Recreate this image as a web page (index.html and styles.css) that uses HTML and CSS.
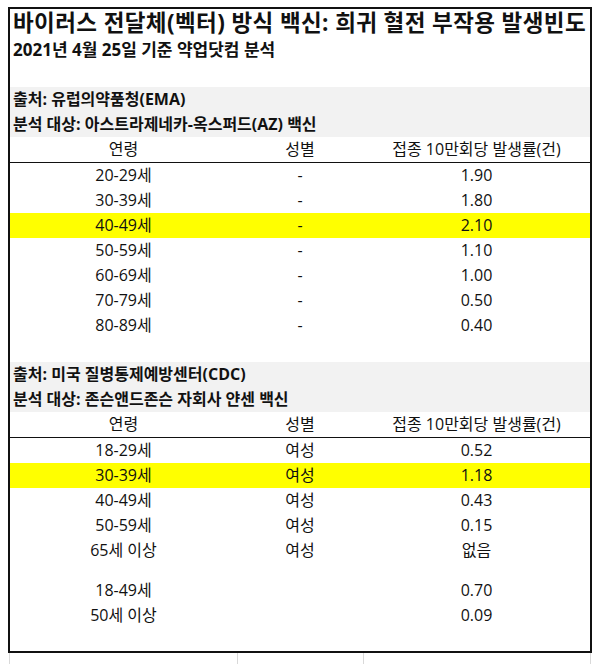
FILE: index.html
```html
<!DOCTYPE html>
<html lang="ko">
<head>
<meta charset="utf-8">
<link rel="stylesheet" href="styles.css">
</head>
<body>
<div class="sheet">
  <div class="box">
    <div class="row title"><span>바이러스 전달체(벡터) 방식 백신: 희귀 혈전 부작용 발생빈도</span></div>
    <div class="row sub"><span>2021년 4월 25일 기준 약업닷컴 분석</span></div>
    <div class="row blank"></div>

    <div class="row src">출처: 유럽의약품청(EMA)</div>
    <div class="row src">분석 대상: 아스트라제네카-옥스퍼드(AZ) 백신</div>
    <div class="row grid head"><span>연령</span><span>성별</span><span>접종 10만회당 발생률(건)</span></div>
    <div class="row grid"><span>20-29세</span><span>-</span><span>1.90</span></div>
    <div class="row grid"><span>30-39세</span><span>-</span><span>1.80</span></div>
    <div class="row grid hl"><span>40-49세</span><span>-</span><span>2.10</span></div>
    <div class="row grid"><span>50-59세</span><span>-</span><span>1.10</span></div>
    <div class="row grid"><span>60-69세</span><span>-</span><span>1.00</span></div>
    <div class="row grid"><span>70-79세</span><span>-</span><span>0.50</span></div>
    <div class="row grid"><span>80-89세</span><span>-</span><span>0.40</span></div>
    <div class="row blank b24"></div>

    <div class="row src">출처: 미국 질병통제예방센터(CDC)</div>
    <div class="row src">분석 대상: 존슨앤드존슨 자회사 얀센 백신</div>
    <div class="row grid head"><span>연령</span><span>성별</span><span>접종 10만회당 발생률(건)</span></div>
    <div class="row grid"><span>18-29세</span><span>여성</span><span>0.52</span></div>
    <div class="row grid hl"><span>30-39세</span><span>여성</span><span>1.18</span></div>
    <div class="row grid"><span>40-49세</span><span>여성</span><span>0.43</span></div>
    <div class="row grid"><span>50-59세</span><span>여성</span><span>0.15</span></div>
    <div class="row grid"><span>65세 이상</span><span>여성</span><span>없음</span></div>
    <div class="row blank b15"></div>
    <div class="row grid"><span>18-49세</span><span></span><span>0.70</span></div>
    <div class="row grid"><span>50세 이상</span><span></span><span>0.09</span></div>
    <div class="row blank b23"></div>
  </div>
  <div class="stub"><span></span><span></span><span></span></div>
</div>
</body>
</html>
```

FILE: styles.css
```css
html, body {
  margin: 0;
  padding: 0;
  background: #fff;
}
body {
  font-family: "Open Sans", "Noto Sans CJK KR", sans-serif;
  color: #111;
}
.sheet {
  padding: 7px 0 0 8px;
  width: 584px;
}
.box {
  border: 2px solid #111;
  width: 580px;
}
.row {
  height: 25px;
  line-height: 25px;
  font-size: 16px;
  white-space: nowrap;
}
.title {
  height: 27px;
  line-height: 28px;
  font-size: 22.5px;
  font-weight: 700;
  padding-left: 3px;
  letter-spacing: 0.4px;
}
.sub {
  height: 26px;
  line-height: 28px;
  font-size: 17px;
  font-weight: 700;
  padding-left: 3px;
}
.blank { height: 25px; }
.b24 { height: 24px; }
.b15 { height: 15px; }
.b23 { height: 23px; }
.src {
  background: #f2f2f2;
  font-weight: 700;
  padding-left: 3px;
}
.grid {
  display: grid;
  grid-template-columns: 227px 126px 227px;
}
.grid span {
  text-align: center;
}
.head {
  border-bottom: 1px solid #111;
}
.hl {
  background: #ffff00;
}
.stub {
  display: grid;
  grid-template-columns: 228px 126px 228px;
  height: 12px;
  margin-left: 1px;
}
.stub span {
  border-left: 1px solid #d9d9d9;
}
.stub span:last-child {
  border-right: 1px solid #d9d9d9;
}
```
